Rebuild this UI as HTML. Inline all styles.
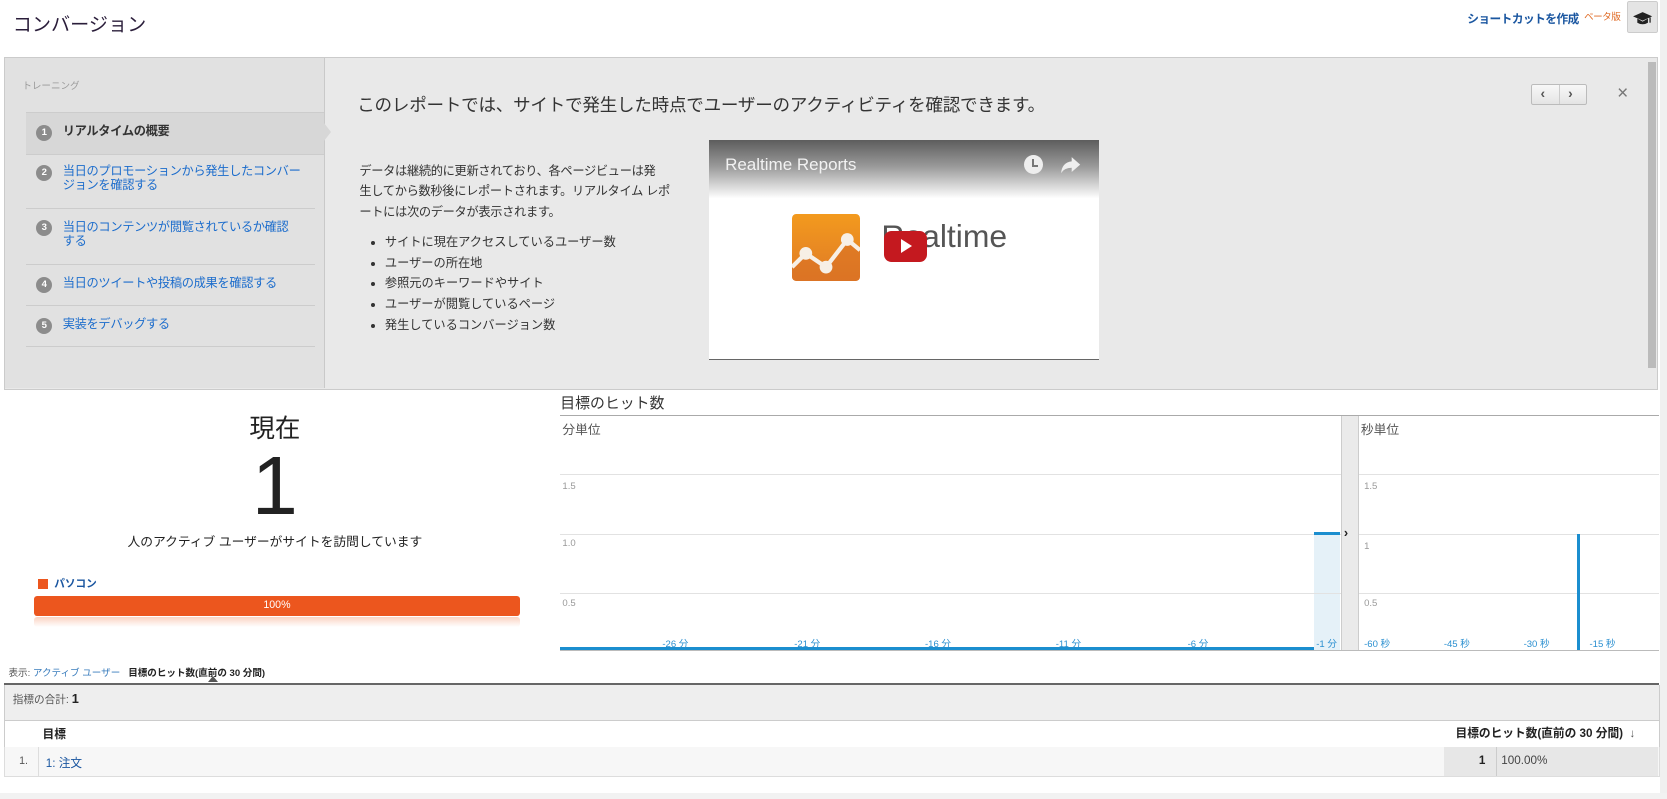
<!DOCTYPE html>
<html><head><meta charset="utf-8">
<style>
html,body{margin:0;padding:0;background:#fff;overflow:hidden}
body{width:1667px;height:799px}
#w{zoom:1.0632;width:1568px;height:752px;position:relative;font-family:"Liberation Sans","Noto Sans CJK JP",sans-serif;color:#222}
.a{position:absolute}
.num{display:inline-block;width:15px;height:15px;border-radius:50%;background:#8c8c8c;color:#fff;font-size:9px;font-weight:bold;text-align:center;line-height:15px;position:absolute;left:10px}
.it{position:absolute;left:24px;width:272px;border-bottom:1px solid #ccc;font-size:11.5px;line-height:13px;letter-spacing:-0.3px}
.it span.t{position:absolute;left:35px;color:#1b6ccc;white-space:nowrap}
.g{position:absolute;height:1px;background:#e2e2e2}
.yl{position:absolute;font-size:9px;color:#999}
.xl{position:absolute;font-size:9px;color:#2a8fd0}
</style></head><body><div id="w">
<div class="a" style="left:12px;top:8px;font-size:18px;color:#2a1d3a">コンバージョン</div>
<div class="a" style="left:1380px;top:9px;font-size:11px;font-weight:bold;color:#1a56a0;letter-spacing:-0.5px">ショートカットを作成</div>
<div class="a" style="left:1490px;top:8px;font-size:9px;color:#e06a24;letter-spacing:-0.5px">ベータ版</div>
<div class="a" style="left:1530px;top:1px;width:28px;height:28px;background:#e4e4e4;border:1px solid #ccc;border-radius:2px;text-align:center">
<svg width="20" height="14" viewBox="0 0 20 14" style="margin-top:8px"><path d="M1 5L10 1L19 5L10 9Z" fill="#222"/><path d="M5 7V11Q10 14 15 11V7L10 10Z" fill="#222"/><path d="M17 6V11" stroke="#222" stroke-width="1.2"/></svg></div>
<div class="a" style="left:1561px;top:0;width:7px;height:752px;background:#f0f0f0"></div>

<div class="a" style="left:4px;top:54px;width:1554px;height:311px;background:#e9e9e9;border:1px solid #cbcbcb"></div>
<div class="a" style="left:5px;top:55px;width:300px;height:310px;background:#e1e1e1;border-right:1px solid #c9c9c9"></div>
<div class="a" style="left:1550px;top:58px;width:8px;height:288px;background:#bbb"></div>
<div class="a" style="left:21px;top:73px;font-size:9px;color:#999">トレーニング</div>
<div class="it" style="top:105px;height:39px;background:#d7d7d7;width:281px;border-top:1px solid #ccc"><span class="num" style="top:12px">1</span><span class="t" style="top:12px;color:#333;font-weight:bold">リアルタイムの概要</span></div>
<div class="a" style="left:305px;top:116px;width:0;height:0;border-top:9px solid transparent;border-bottom:9px solid transparent;border-left:7px solid #d7d7d7"></div>
<div class="it" style="top:145px;height:51px"><span class="num" style="top:10px">2</span><span class="t" style="top:10px">当日のプロモーションから発生したコンバー<br>ジョンを確認する</span></div>
<div class="it" style="top:197px;height:51px"><span class="num" style="top:10px">3</span><span class="t" style="top:11px">当日のコンテンツが閲覧されているか確認<br>する</span></div>
<div class="it" style="top:249px;height:38px"><span class="num" style="top:12px">4</span><span class="t" style="top:12px">当日のツイートや投稿の成果を確認する</span></div>
<div class="it" style="top:288px;height:37px"><span class="num" style="top:11px">5</span><span class="t" style="top:11px">実装をデバッグする</span></div>

<div class="a" style="left:336px;top:87px;font-size:16.5px;color:#333;letter-spacing:-0.2px">このレポートでは、サイトで発生した時点でユーザーのアクティビティを確認できます。</div>
<div class="a" style="left:1440px;top:79px;width:51px;height:18px;border:1px solid #bbb;border-radius:2px;background:linear-gradient(#f8f8f8,#e4e4e4)"><div style="position:absolute;left:25px;top:0;width:1px;height:18px;background:#ccc"></div><span style="position:absolute;left:8px;top:0;font-size:13px;font-weight:bold;color:#555">‹</span><span style="position:absolute;left:34px;top:0;font-size:13px;font-weight:bold;color:#555">›</span></div>
<div class="a" style="left:1521px;top:78px;font-size:18px;color:#777">×</div>
<div class="a" style="left:338px;top:151px;font-size:11.5px;line-height:19.5px;color:#333;white-space:nowrap;letter-spacing:-0.3px">データは継続的に更新されており、各ページビューは発<br>生してから数秒後にレポートされます。リアルタイム レポ<br>ートには次のデータが表示されます。</div>
<ul class="a" style="left:338px;top:218px;margin:0;padding-left:24px;font-size:11.5px;line-height:19.5px;color:#333">
<li>サイトに現在アクセスしているユーザー数</li><li>ユーザーの所在地</li><li>参照元のキーワードやサイト</li><li>ユーザーが閲覧しているページ</li><li>発生しているコンバージョン数</li></ul>

<div class="a" style="left:667px;top:132px;width:367px;height:206px;background:linear-gradient(#5d5d5d 0,#9a9a9a 25px,#fff 55px,#fff);border-bottom:1px solid #666;overflow:hidden">
<div style="position:absolute;left:15px;top:14px;font-size:16px;color:#f2f2f2">Realtime Reports</div>
<div style="position:absolute;left:296px;top:14px;width:18px;height:18px;border-radius:50%;background:#eee"><div style="position:absolute;left:8px;top:4px;width:2px;height:6px;background:#777"></div><div style="position:absolute;left:8px;top:9px;width:5px;height:2px;background:#777"></div></div>
<svg style="position:absolute;left:330px;top:14px" width="20" height="18" viewBox="0 0 20 18"><path d="M11 2L19 9L11 16V12Q4 12 1 17Q2 7 11 6Z" fill="#eee"/></svg>
<div style="position:absolute;left:78px;top:69px;width:64px;height:63px;border-radius:4px;overflow:hidden;background:linear-gradient(#f39a1e,#df7a26)">
<svg width="64" height="63" style="display:block"><path d="M0 50L13 37L32 50L52 24L64 34V63H0Z" fill="#d86f24" opacity=".6"/><path d="M0 50L13 37L32 50L52 24L64 34" stroke="#f7efe5" stroke-width="4" fill="none"/><circle cx="13" cy="37" r="6" fill="#f7efe5"/><circle cx="32" cy="50" r="6" fill="#f7efe5"/><circle cx="52" cy="24" r="6" fill="#f7efe5"/></svg></div>
<div style="position:absolute;left:162px;top:73px;font-size:30px;color:#555">Realtime</div>
<div style="position:absolute;left:164px;top:85px;width:41px;height:29px;border-radius:7px;background:#c4191f"><div style="position:absolute;left:16px;top:8px;border-top:7px solid transparent;border-bottom:7px solid transparent;border-left:11px solid #fff"></div></div>
</div>

<div class="a" style="left:0;width:517px;top:384px;text-align:center;font-size:24px;color:#222">現在</div>
<div class="a" style="left:0;width:517px;top:415px;text-align:center;font-size:78px;line-height:85px;color:#222">1</div>
<div class="a" style="left:0;width:517px;top:499px;text-align:center;font-size:12px;color:#222">人のアクティブ ユーザーがサイトを訪問しています</div>
<div class="a" style="left:36px;top:545px;width:9px;height:9px;background:#ec561e"></div>
<div class="a" style="left:51px;top:542px;font-size:10px;font-weight:bold;color:#1a56a0">パソコン</div>
<div class="a" style="left:32px;top:561px;width:457px;height:18px;background:#ec561e;border-radius:3px;color:#fff;font-size:10px;text-align:center;line-height:18px">100%</div>
<div class="a" style="left:32px;top:580px;width:457px;height:10px;background:linear-gradient(#fbd3c2,#fff);border-radius:3px"></div>

<div class="a" style="left:527px;top:369px;font-size:14px;color:#333">目標のヒット数</div>
<div class="a" style="left:527px;top:390px;width:1033px;height:1px;background:#aaa"></div>
<div class="a" style="left:529px;top:394px;font-size:12px;color:#555">分単位</div>
<div class="a" style="left:1280px;top:394px;font-size:12px;color:#555">秒単位</div>
<div class="a" style="left:1261px;top:391px;width:15px;height:221px;background:#eaeaea;border-left:1px solid #ccc;border-right:1px solid #ccc"></div>
<div class="a" style="left:1264px;top:494px;font-size:12px;font-weight:bold;color:#222">›</div>
<div class="a" style="left:1236px;top:502px;width:24px;height:109px;background:#e5f1f8"></div>
<div class="g" style="left:527px;top:446px;width:734px"></div><div class="g" style="left:527px;top:502px;width:734px"></div><div class="g" style="left:527px;top:558px;width:734px"></div>
<div class="g" style="left:1278px;top:446px;width:282px"></div><div class="g" style="left:1278px;top:502px;width:282px"></div><div class="g" style="left:1278px;top:558px;width:282px"></div>
<div class="yl" style="left:529px;top:452px">1.5</div><div class="yl" style="left:529px;top:506px">1.0</div><div class="yl" style="left:529px;top:562px">0.5</div>
<div class="yl" style="left:1283px;top:452px">1.5</div><div class="yl" style="left:1283px;top:509px">1</div><div class="yl" style="left:1283px;top:562px">0.5</div>
<div class="a" style="left:527px;top:609px;width:709px;height:3px;background:#1b8ecf"></div>
<div class="a" style="left:1236px;top:500px;width:24px;height:3px;background:#1b8ecf"></div>
<div class="a" style="left:527px;top:611px;width:1033px;height:1px;background:#bbb"></div>
<div class="a" style="left:1483px;top:502px;width:3px;height:109px;background:#1b8ecf"></div>
<div class="xl" style="left:623px;top:598px">-26 分</div><div class="xl" style="left:747px;top:598px">-21 分</div><div class="xl" style="left:870px;top:598px">-16 分</div><div class="xl" style="left:993px;top:598px">-11 分</div><div class="xl" style="left:1117px;top:598px">-6 分</div><div class="xl" style="left:1238px;top:598px">-1 分</div>
<div class="xl" style="left:1283px;top:598px">-60 秒</div><div class="xl" style="left:1358px;top:598px">-45 秒</div><div class="xl" style="left:1433px;top:598px">-30 秒</div><div class="xl" style="left:1495px;top:598px">-15 秒</div>

<div class="a" style="left:8px;top:625px;font-size:9px;color:#555">表示: <span style="color:#3a7dbd">アクティブ ユーザー</span>&nbsp;&nbsp;&nbsp;<b style="color:#222">目標のヒット数(直前の 30 分間)</b></div>
<div class="a" style="left:196px;top:636px;border-left:5px solid transparent;border-right:5px solid transparent;border-bottom:6px solid #555"></div>
<div class="a" style="left:4px;top:642px;width:1556px;height:2px;background:#666"></div>
<div class="a" style="left:4px;top:644px;width:1555px;height:33px;background:#eee;border-left:1px solid #ccc;border-right:1px solid #ccc"></div>
<div class="a" style="left:12px;top:650px;font-size:10px;color:#555">指標の合計: <b style="font-size:12px;color:#222">1</b></div>
<div class="a" style="left:4px;top:677px;width:1555px;height:25px;background:#fff;border:1px solid #ccc"></div>
<div class="a" style="left:40px;top:682px;font-size:11px;font-weight:bold;color:#222">目標</div>
<div class="a" style="left:1369px;top:681px;font-size:11px;font-weight:bold;color:#222">目標のヒット数(直前の 30 分間)&nbsp;&nbsp;<span style="color:#555">↓</span></div>
<div class="a" style="left:4px;top:703px;width:1555px;height:27px;background:#f7f7f7;border:1px solid #ddd;border-top:0"></div>
<div class="a" style="left:36px;top:703px;width:1px;height:27px;background:#ddd"></div>
<div class="a" style="left:1358px;top:703px;width:201px;height:27px;background:#e7e7e7"></div>
<div class="a" style="left:1407px;top:703px;width:1px;height:27px;background:#ccc"></div>
<div class="a" style="left:18px;top:710px;font-size:10px;color:#555">1.</div>
<div class="a" style="left:43px;top:709px;font-size:11px;color:#1a56a0">1: 注文</div>
<div class="a" style="left:1391px;top:709px;font-size:11px;font-weight:bold;color:#222">1</div>
<div class="a" style="left:1412px;top:709px;font-size:11px;color:#444">100.00%</div>
<div class="a" style="left:0;top:746px;width:1568px;height:6px;background:#f2f2f2"></div>
</div></body></html>
